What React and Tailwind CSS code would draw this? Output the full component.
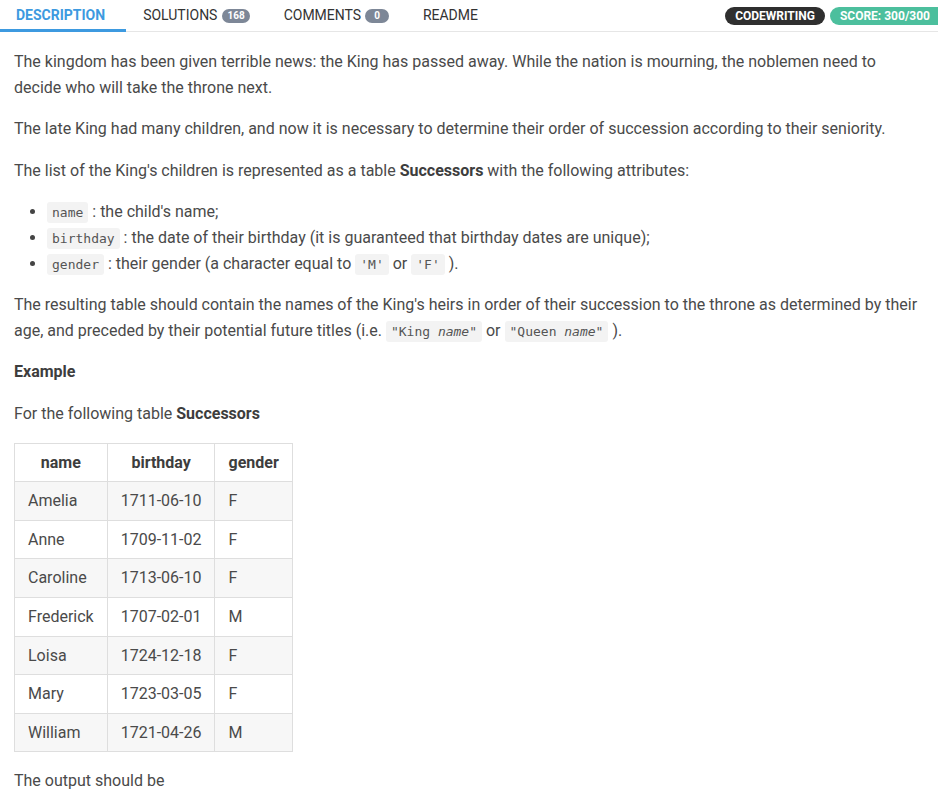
import React from "react";

const Code = ({ children }) => (
  <code className="rounded-[3px] bg-[#f3f3f3] px-[5px] py-[3px] font-['DejaVu_Sans_Mono',monospace] text-[13px] leading-[1] text-[#555]">
    {children}
  </code>
);

const rows = [
  ["Amelia", "1711-06-10", "F"],
  ["Anne", "1709-11-02", "F"],
  ["Caroline", "1713-06-10", "F"],
  ["Frederick", "1707-02-01", "M"],
  ["Loisa", "1724-12-18", "F"],
  ["Mary", "1723-03-05", "F"],
  ["William", "1721-04-26", "M"],
];

export default function App() {
  return (
    <div className="min-h-[800px] bg-white font-['Roboto',sans-serif] text-[#4a4a4a]">
      <div className="flex h-[32px] items-stretch border-b border-[#e6e6e6]">
        <div className="relative flex items-center pl-4 pr-[21px] text-[14px] font-bold text-[#3d9ae0]">
          DESCRIPTION
          <div className="absolute bottom-[-1px] left-0 right-0 h-[3px] bg-[#3d9ae0]" />
        </div>
        <div className="flex items-center gap-[5px] px-[17px] text-[14px] text-[#333]">
          SOLUTIONS
          <span className="rounded-full bg-[#7d8797] px-[5px] py-[1px] text-[10px] font-bold leading-[12px] text-white">168</span>
        </div>
        <div className="flex items-center gap-[4px] px-[17px] text-[14px] text-[#333]">
          COMMENTS
          <span className="rounded-full bg-[#7d8797] px-[9px] py-[1px] text-[10px] font-bold leading-[12px] text-white">0</span>
        </div>
        <div className="flex items-center px-[17px] text-[14px] text-[#333]">README</div>
        <div className="ml-auto flex items-center gap-[5px]">
          <span className="rounded-full bg-[#2f2f2f] px-[10px] py-[1px] text-[12px] font-bold leading-[16px] text-white">CODEWRITING</span>
          <span className="rounded-l-full bg-[#4cbf9d] pl-[10px] pr-[8px] py-[1px] text-[12px] font-bold leading-[16px] text-white">SCORE: 300/300</span>
        </div>
      </div>

      <div className="px-[14px] pt-[17px] text-[16px] leading-[25.6px]">
        <p className="mb-4">
          The kingdom has been given terrible news: the King has passed away. While the nation is mourning, the noblemen need to decide who will take the throne next.
        </p>
        <p className="mb-4">
          The late King had many children, and now it is necessary to determine their order of succession according to their seniority.
        </p>
        <p className="mb-4">
          The list of the King's children is represented as a table <b className="text-[#3d3d3d]">Successors</b> with the following attributes:
        </p>
        <ul className="mb-4 list-disc pl-[33px] marker:text-[#444]">
          <li>
            <Code>name</Code> : the child's name;
          </li>
          <li>
            <Code>birthday</Code> : the date of their birthday (it is guaranteed that birthday dates are unique);
          </li>
          <li>
            <Code>gender</Code> : their gender (a character equal to <Code>'M'</Code> or <Code>'F'</Code> ).
          </li>
        </ul>
        <p className="mb-4">
          The resulting table should contain the names of the King's heirs in order of their succession to the throne as determined by their age, and preceded by their potential future titles (i.e.{" "}
          <Code>
            "King <i>name</i>"
          </Code>{" "}
          or{" "}
          <Code>
            "Queen <i>name</i>"
          </Code>{" "}
          ).
        </p>
        <p className="mb-4 font-bold text-[#3d3d3d]">Example</p>
        <p className="mb-4">
          For the following table <b className="text-[#3d3d3d]">Successors</b>
        </p>
        <table className="mb-4 border-collapse">
          <thead>
            <tr>
              <th className="border border-[#dedede] px-[13px] py-[6px] text-center font-bold text-[#3d3d3d]">name</th>
              <th className="border border-[#dedede] px-[13px] py-[6px] text-center font-bold text-[#3d3d3d]">birthday</th>
              <th className="border border-[#dedede] px-[13px] py-[6px] text-center font-bold text-[#3d3d3d]">gender</th>
            </tr>
          </thead>
          <tbody>
            {rows.map((r, i) => (
              <tr key={r[0]} className={i % 2 === 0 ? "bg-[#f7f7f7]" : "bg-white"}>
                {r.map((c, j) => (
                  <td key={j} className="border border-[#dedede] px-[13px] py-[6px] text-left">
                    {c}
                  </td>
                ))}
              </tr>
            ))}
          </tbody>
        </table>
        <p>The output should be</p>
      </div>
    </div>
  );
}
